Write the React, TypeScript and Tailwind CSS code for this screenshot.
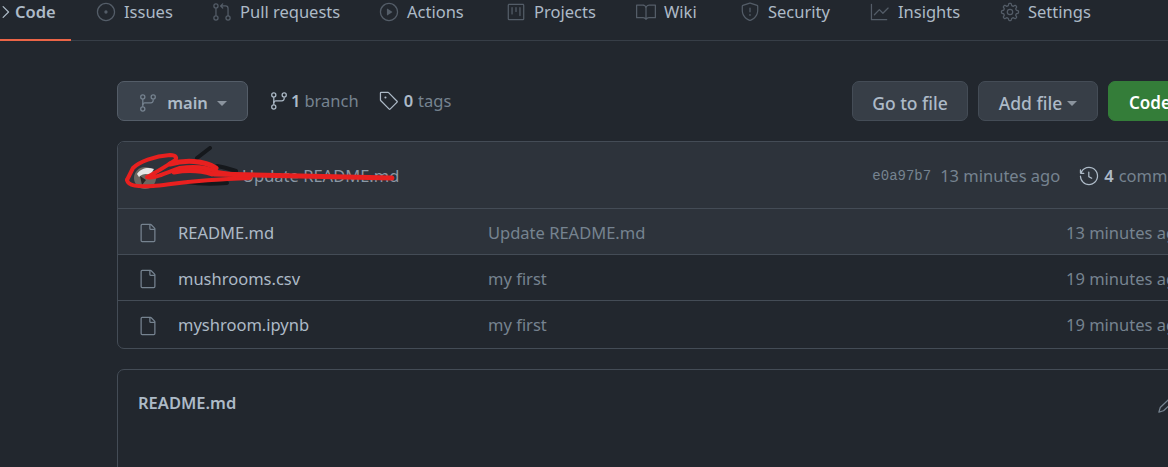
import type { ReactNode } from 'react'
import { GoBook, GoCode, GoFile, GoGear, GoGitBranch, GoGitPullRequest, GoGraph, GoHistory, GoIssueOpened, GoPencil, GoPlay, GoProject, GoShield, GoTag } from 'react-icons/go'

const tabs = [
  { label: 'Issues', icon: <GoIssueOpened />, width: 'w-[116px]' },
  { label: 'Pull requests', icon: <GoGitPullRequest />, width: 'w-[167px]' },
  { label: 'Actions', icon: <GoPlay />, width: 'w-[127px]' },
  { label: 'Projects', icon: <GoProject />, width: 'w-[130px]' },
  { label: 'Wiki', icon: <GoBook />, width: 'w-[104px]' },
  { label: 'Security', icon: <GoShield />, width: 'w-[130px]' },
  { label: 'Insights', icon: <GoGraph />, width: 'w-[130px]' },
  { label: 'Settings', icon: <GoGear />, width: 'w-[110px]' },
]

const files = [
  { name: 'README.md', message: 'Update README.md', age: '13 minutes ago', rowClass: 'h-[46px] bg-[#2d333b] border-b border-[#444c56]' },
  { name: 'mushrooms.csv', message: 'my first', age: '19 minutes ago', rowClass: 'h-[46px] border-b border-[#444c56]' },
  { name: 'myshroom.ipynb', message: 'my first', age: '19 minutes ago', rowClass: 'h-[47px] pb-[1px]' },
]

function Caret() {
  return <span className="h-0 w-0 border-x-[5px] border-t-[5px] border-x-transparent border-t-[#8b949e]" />
}

function Button({ children, className }: { children: ReactNode; className: string }) {
  return (
    <button className={`flex h-10 items-center rounded-[7px] border pt-[4px] ${className}`}>
      {children}
    </button>
  )
}

export default function App() {
  return (
    <div className="h-[467px] w-[1168px] overflow-hidden bg-[#22272e] text-[16.5px] text-[#adbac7] [font-family:'Noto_Sans','Open_Sans',sans-serif]">
      {/* Tab nav */}
      <nav className="flex h-[41px] w-[1300px] border-b border-[#373e47]">
        <div className="flex h-[41px] w-[71px] items-start gap-[5px] border-b-2 border-[#ec6547]">
          <GoCode className="ml-[-10px] mt-[2px] text-[20px] text-[#adbac7]" />
          <span className="font-semibold leading-[24px]">Code</span>
        </div>
        <div className="ml-[25px] flex">
          {tabs.map((t) => (
            <div key={t.label} className={`flex h-6 items-center gap-[8px] ${t.width}`}>
              <span className="text-[20px] text-[#545d68]">{t.icon}</span>
              <span>{t.label}</span>
            </div>
          ))}
        </div>
      </nav>

      <main className="w-[1300px] pl-[117px]">
        {/* Branch bar */}
        <div className="mt-10 flex h-10 w-[1120px] items-center justify-between">
          <div className="flex items-center">
            <Button className="w-[131px] justify-center gap-[9px] border-[#545d68] bg-[#3b434d] font-semibold">
              <GoGitBranch className="text-[20px] text-[#768390]" />
              <span>main</span>
              <Caret />
            </Button>
            <div className="ml-[21px] flex items-center gap-[4px]">
              <GoGitBranch className="mr-[-2px] text-[20px] text-[#adbac7]" />
              <span className="font-semibold">1</span>
              <span className="text-[#768390]">branch</span>
            </div>
            <div className="ml-[20px] flex items-center gap-[5px]">
              <GoTag className="text-[20px] text-[#adbac7]" />
              <span className="font-semibold">0</span>
              <span className="text-[#768390]">tags</span>
            </div>
          </div>
          <div className="flex items-center gap-[10px] text-[17.5px] font-medium">
            <Button className="w-[116px] justify-center border-[#444c56] bg-[#373e47]">Go to file</Button>
            <Button className="w-[120px] justify-center gap-[5px] border-[#444c56] bg-[#373e47]">
              <span>Add file</span>
              <Caret />
            </Button>
            <Button className="w-[129px] justify-start border-[#347d39] bg-[#347d39] pl-5 text-[17px] font-semibold text-white">Code</Button>
          </div>
        </div>

        {/* File list */}
        <section className="mt-5 w-[1120px] overflow-hidden rounded-[7px] border border-[#444c56]">
          <div className="relative flex h-[67px] items-center border-b border-[#444c56] bg-[#2d333b] pl-[124px] pt-[2px] text-[#768390]">
            <span className="text-[#8b98a5]">Update README.md</span>
            {/* redacted avatar + author scribble */}
            <svg className="absolute left-[6px] top-[4px]" width="280" height="50" viewBox="0 0 280 50" fill="none">
              <path d="M73 12 L86 2 M63 36 C75 38 90 38 103 37 M93 20 C100 21 106 23 112 25" stroke="#15181c" strokeWidth="4" strokeLinecap="round" />
              <circle cx="21" cy="32" r="11" fill="#6b6660" />
              <path d="M13 28 C17 22 24 21 30 23 L26 29 C22 27 18 28 15 31 Z" fill="#e6e6e6" />
              <path d="M16 30 L22 34 L18 39 Z" fill="#2a2522" />
              <path d="M3 34 L9 22 C15 16 30 10 46 9 C52 9 54 12 50 15 C42 20 33 26 23 31 C30 33 39 28 56 22 C70 20 83 21 93 26 L126 31" stroke="#e8201f" strokeWidth="4" strokeLinecap="round" strokeLinejoin="round" />
              <path d="M3 34 C4 40 14 41 29 40 C45 39 63 34 126 32" stroke="#e8201f" strokeWidth="4" strokeLinecap="round" />
              <path d="M46 18 C60 14 80 14 92 22 M50 26 C62 24 76 24 88 28 M90 28 L268 32" stroke="#e8201f" strokeWidth="5" strokeLinecap="round" />
            </svg>
            <span className="ml-[473px] text-[14px] [font-family:'Liberation_Mono',monospace]">e0a97b7</span>
            <span className="ml-[9px]">13 minutes ago</span>
            <GoHistory className="ml-[19px] text-[20px] text-[#adbac7]" />
            <span className="ml-[5px] font-semibold text-[#adbac7]">4</span>
            <span className="ml-[5px]">commits</span>
          </div>
          {files.map((f) => (
            <div key={f.name} className={`flex items-center pt-[3px] ${f.rowClass}`}>
              <GoFile className="ml-[20px] text-[20px] text-[#768390]" />
              <span className="ml-[20px] w-[310px]">{f.name}</span>
              <span className="w-[578px] text-[#768390]">{f.message}</span>
              <span className="text-[#768390]">{f.age}</span>
            </div>
          ))}
        </section>

        {/* README box */}
        <section className="mt-5 flex h-[120px] w-[1120px] items-start rounded-t-[7px] border border-[#444c56] pl-5 pt-[21px]">
          <span className="font-semibold">README.md</span>
          <GoPencil className="ml-[921px] mt-[3px] text-[20px] text-[#768390]" />
        </section>
      </main>
    </div>
  )
}
